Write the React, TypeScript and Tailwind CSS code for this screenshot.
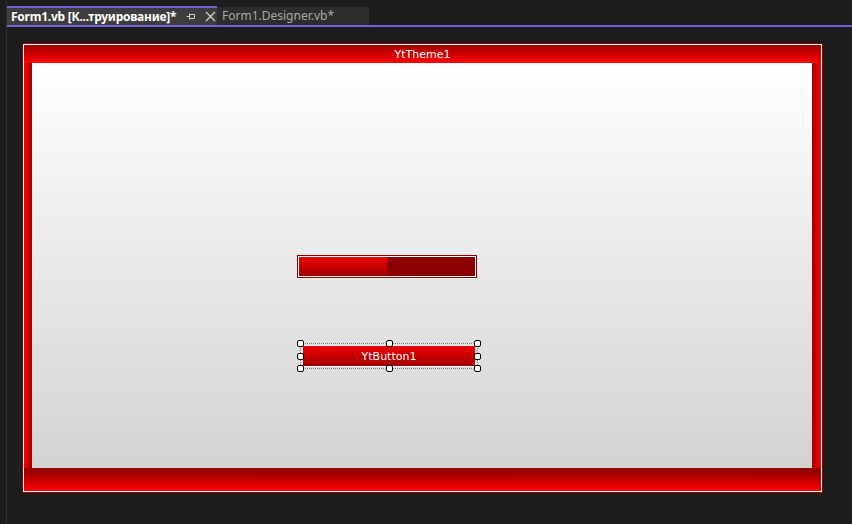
import React from 'react'

function Handle({ className }: { className: string }) {
  return (
    <div
      className={`absolute w-[7px] h-[7px] bg-white border border-black rounded-[2px] ${className}`}
    />
  )
}

export default function App() {
  return (
    <div className="w-[852px] h-[524px] bg-[#1c1c1c] flex overflow-hidden">
      {/* left gutter line */}
      <div className="w-[7px] h-full border-r border-[#2f2f2f]" />

      <div className="flex-1 flex flex-col">
        {/* Tab strip */}
        <div className="h-[27px] pt-[6px] border-b-2 border-[#6f63dc] flex items-start">
          <div className="w-[210px] h-[19px] border-t-2 border-[#6f63dc] bg-[#3d3d3d] flex items-center pl-[4px] text-white text-[12px] font-bold leading-none [font-family:'Noto_Sans',sans-serif]">
            <span className="whitespace-nowrap tracking-[-0.25px]">Form1.vb [К...труирование]*</span>
            <svg className="ml-[10px]" width="11" height="11" viewBox="0 0 11 11">
              <path d="M0.5 5.5h3M3.5 2.5v6M3.5 3.5h5v4h-5" stroke="#d0d0d0" strokeWidth="1" fill="none" />
            </svg>
            <svg className="ml-[8px]" width="11" height="11" viewBox="0 0 11 11">
              <path d="M1 1l9 9M10 1l-9 9" stroke="#d0d0d0" strokeWidth="1.3" />
            </svg>
          </div>
          <div className="w-[152px] h-[18px] mt-[1px] bg-[#2d2d2d] flex items-center pl-[5px] text-[#a8a8a8] text-[12px] leading-none [font-family:'Noto_Sans',sans-serif]">
            Form1.Designer.vb*
          </div>
        </div>

        {/* Designer surface */}
        <div className="pl-[15px] pt-[16px]">
          <div className="w-[801px] h-[450px] border border-[#8b0000]">
            <div className="w-full h-full border border-white flex flex-col">
              {/* title bar */}
              <div className="h-[18px] bg-gradient-to-b from-[#a00000] to-[#ff0000] flex items-center justify-center text-white text-[11px] leading-none [font-family:'DejaVu_Sans',sans-serif]">
                YtTheme1
              </div>

              <div className="flex-1 flex">
                <div className="w-[8px] bg-gradient-to-r from-[#ff0000] to-[#a00000]" />

                {/* client area */}
                <div className="flex-1 bg-gradient-to-b from-white to-[#d3d3d3] pl-[265px] pt-[192px]">
                  {/* progress bar */}
                  <div className="w-[180px] h-[23px] border border-[#8b0000]">
                    <div className="w-full h-full border border-white flex">
                      <div className="w-[88px] h-full bg-gradient-to-b from-[#f00000] to-[#a00000]" />
                      <div className="flex-1 h-full bg-[#8b0000]" />
                    </div>
                  </div>

                  {/* button with selection */}
                  <div className="relative ml-[3px] mt-[65px] w-[178px] h-[26px] border border-dotted border-[#7a7a7a] p-px">
                    <div className="w-full h-full border border-white bg-gradient-to-b from-[#ee0000] to-[#a00000] flex items-center justify-center text-white text-[11px] leading-none [font-family:'DejaVu_Sans',sans-serif]">
                      YtButton1
                    </div>
                    <Handle className="-left-[4px] -top-[4px]" />
                    <Handle className="left-[85px] -top-[4px]" />
                    <Handle className="-right-[4px] -top-[4px]" />
                    <Handle className="-left-[4px] top-[9px]" />
                    <Handle className="-right-[4px] top-[9px]" />
                    <Handle className="-left-[4px] -bottom-[4px]" />
                    <Handle className="left-[85px] -bottom-[4px]" />
                    <Handle className="-right-[4px] -bottom-[4px]" />
                  </div>
                </div>

                <div className="w-[9px] bg-gradient-to-r from-[#a00000] to-[#ff0000]" />
              </div>

              {/* bottom bar */}
              <div className="h-[23px] bg-gradient-to-b from-[#8b0000] to-[#ff0000]" />
            </div>
          </div>
        </div>
      </div>
    </div>
  )
}
